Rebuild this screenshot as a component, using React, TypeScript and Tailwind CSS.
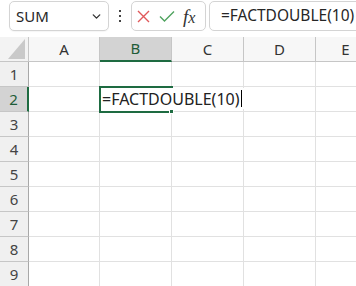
import { ChevronDown } from 'lucide-react'

const cols = ['A', 'B', 'C', 'D', 'E']
const widths = ['w-[71px]', 'w-[72px]', 'w-[72px]', 'w-[72px]', 'w-[60px]']
const rows = [1, 2, 3, 4, 5, 6, 7, 8, 9]

function TopBar() {
    return (
        <div className="flex h-[37px] items-start pt-px pl-[9px]">
            <div className="flex h-[30px] w-[100px] shrink-0 items-center justify-between rounded-[5px] border border-[#d4d4d4] bg-white pl-[6px] pr-[5px] shadow-[0_1px_1px_rgba(0,0,0,0.04)]">
                <span className="text-[15px] text-[#262626]">SUM</span>
                <ChevronDown className="h-[13px] w-[13px] text-[#333]" strokeWidth={2.5} />
            </div>
            <div className="flex h-[30px] w-[22px] shrink-0 flex-col items-center justify-center gap-[3px]">
                <span className="h-[2px] w-[2px] bg-[#444]" />
                <span className="h-[2px] w-[2px] bg-[#444]" />
                <span className="h-[2px] w-[2px] bg-[#444]" />
            </div>
            <div className="flex h-[30px] w-[75px] shrink-0 items-center rounded-[5px] border border-[#d4d4d4] bg-white pl-[5px]">
                <svg width="13" height="13" viewBox="0 0 13 13">
                    <path d="M1 1 L12 12 M12 1 L1 12" stroke="#e0585a" strokeWidth="1.4" fill="none" />
                </svg>
                <svg className="ml-[9px]" width="16" height="13" viewBox="0 0 16 13">
                    <path d="M1 6.5 L5.5 11 L15 1.5" stroke="#4fa35f" strokeWidth="1.4" fill="none" />
                </svg>
                <span className="ml-[8px] font-['Liberation_Serif',serif] text-[19px] italic leading-none text-[#333]">
                    <span>f</span>
                    <span className="text-[16px]">x</span>
                </span>
            </div>
            <div className="ml-[3px] flex h-[30px] w-[170px] shrink-0 items-center rounded-[5px] border border-[#d4d4d4] bg-white pl-[11px]">
                <span className="whitespace-nowrap text-[15.5px] text-[#262626]">=FACTDOUBLE(10)</span>
            </div>
        </div>
    )
}

function HeaderRow() {
    return (
        <div className="flex h-[25px]">
            <div className="relative w-[29px] shrink-0 border-r border-b border-[#c6c6c6] bg-[#f3f3f3]">
                <svg className="absolute left-0 top-0" width="29" height="25" viewBox="0 0 29 25">
                    <polygon points="25,2 25,22 8,22" fill="#c9c9c9" />
                </svg>
            </div>
            {cols.map((c, i) => {
                const selected = c === 'B'
                return (
                    <div
                        key={c}
                        className={
                            selected
                                ? `${widths[i]} flex shrink-0 items-center justify-center border-r border-[#c6c6c6] border-b-2 border-b-[#1e6b41] bg-[#d3d3d3] text-[15px] text-[#1e5c38]`
                                : `${widths[i]} flex shrink-0 items-center justify-center border-r border-b border-[#c6c6c6] bg-[#f7f7f7] text-[15px] text-[#333]`
                        }
                    >
                        {c}
                    </div>
                )
            })}
        </div>
    )
}

function GridRow({ n }: { n: number }) {
    const selected = n === 2
    return (
        <div className="flex h-[25px]">
            <div
                className={
                    selected
                        ? 'flex w-[29px] shrink-0 items-center justify-center border-r-2 border-r-[#1e6b41] border-b border-b-[#c6c6c6] bg-[#d3d3d3] text-[15px] text-[#1e5c38]'
                        : 'flex w-[29px] shrink-0 items-center justify-center border-r border-b border-[#a8a8a8] border-b-[#c6c6c6] bg-[#f0f0f0] text-[15px] text-[#444]'
                }
            >
                {n}
            </div>
            {cols.map((c, i) => {
                const active = selected && c === 'B'
                return (
                    <div
                        key={c}
                        className={`${widths[i]} relative shrink-0 border-r border-b border-[#e1e1e1]`}
                    >
                        {active && (
                            <>
                                <div className="absolute -left-px -top-px z-20 h-[27px] w-[74px] border-2 border-[#1e6b41]" />
                                <div className="absolute -bottom-[3px] -right-[3px] z-20 h-[5px] w-[5px] border border-white bg-[#1e6b41]" />
                                <div className="absolute left-[2px] top-px z-30 flex h-[21px] items-center whitespace-nowrap bg-white pr-[2px] text-[16px] text-[#222]">
                                    =FACTDOUBLE(10)
                                    <span className="ml-px h-[17px] w-px bg-black" />
                                </div>
                            </>
                        )}
                    </div>
                )
            })}
        </div>
    )
}

export default function App() {
    return (
        <div className="h-[286px] w-[356px] overflow-hidden bg-white font-['Noto_Sans','Noto_Sans_CJK_JP',sans-serif]">
            <TopBar />
            <HeaderRow />
            {rows.map((n) => (
                <GridRow key={n} n={n} />
            ))}
        </div>
    )
}
